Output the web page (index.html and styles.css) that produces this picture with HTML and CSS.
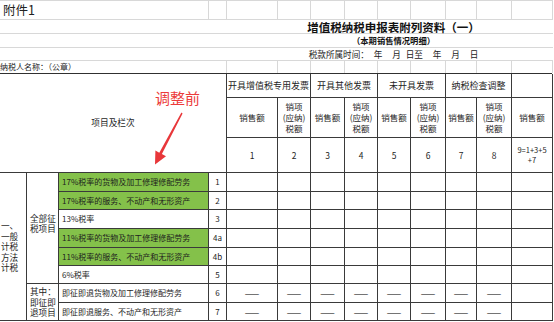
FILE: index.html
```html
<!DOCTYPE html>
<html lang="zh-CN">
<head>
<meta charset="utf-8">
<title>增值税纳税申报表附列资料（一）</title>
<link rel="stylesheet" href="styles.css">
</head>
<body>
<div class="page">
  <div class="sheet-top">
    <div class="tc first span2 attach">附件1</div>
    <div class="tc first"></div><div class="tc first"></div><div class="tc first"></div><div class="tc first"></div><div class="tc first"></div>
    <div class="tc first"></div><div class="tc first"></div><div class="tc first"></div><div class="tc first"></div><div class="tc first"></div>
    <div class="tc full title">增值税纳税申报表附列资料（一）</div>
    <div class="tc full subtitle">（本期销售情况明细）</div>
    <div class="tc full period">税款所属时间： 年  月 日至  年  月  日</div>
    <div class="tc last span3 payer">纳税人名称：（公章）</div>
    <div class="tc last"></div><div class="tc last"></div><div class="tc last"></div><div class="tc last"></div><div class="tc last"></div>
    <div class="tc last"></div><div class="tc last"></div><div class="tc last"></div><div class="tc last"></div>
  </div>

  <div class="form">
    <div class="c h-item">项目及栏次</div>
    <div class="c span2 grp">开具增值税专用发票</div>
    <div class="c span2 grp">开具其他发票</div>
    <div class="c span2 grp">未开具发票</div>
    <div class="c span2 grp">纳税检查调整</div>
    <div class="c grp"></div>

    <div class="c sub">销售额</div><div class="c sub">销项<br>(应纳)<br>税额</div>
    <div class="c sub">销售额</div><div class="c sub">销项<br>(应纳)<br>税额</div>
    <div class="c sub">销售额</div><div class="c sub">销项<br>(应纳)<br>税额</div>
    <div class="c sub">销售额</div><div class="c sub">销项<br>(应纳)<br>税额</div>
    <div class="c sub">销售额</div>

    <div class="c num">1</div><div class="c num">2</div><div class="c num">3</div><div class="c num">4</div>
    <div class="c num">5</div><div class="c num">6</div><div class="c num">7</div><div class="c num">8</div>
    <div class="c num formula">9=1+3+5<br>+7</div>

    <div class="c side v-general">一、一般计税方法计税</div>
    <div class="c side v-all">全部征税项目</div>
    <div class="c side v-refund">其中：即征即退项目</div>

    <div class="c item green">17%税率的货物及加工修理修配劳务</div><div class="c no">1</div>
    <div class="c"></div><div class="c"></div><div class="c"></div><div class="c"></div><div class="c"></div><div class="c"></div><div class="c"></div><div class="c"></div><div class="c"></div>

    <div class="c item green">17%税率的服务、不动产和无形资产</div><div class="c no">2</div>
    <div class="c"></div><div class="c"></div><div class="c"></div><div class="c"></div><div class="c"></div><div class="c"></div><div class="c"></div><div class="c"></div><div class="c"></div>

    <div class="c item">13%税率</div><div class="c no">3</div>
    <div class="c"></div><div class="c"></div><div class="c"></div><div class="c"></div><div class="c"></div><div class="c"></div><div class="c"></div><div class="c"></div><div class="c"></div>

    <div class="c item green">11%税率的货物及加工修理修配劳务</div><div class="c no">4a</div>
    <div class="c"></div><div class="c"></div><div class="c"></div><div class="c"></div><div class="c"></div><div class="c"></div><div class="c"></div><div class="c"></div><div class="c"></div>

    <div class="c item green">11%税率的服务、不动产和无形资产</div><div class="c no">4b</div>
    <div class="c"></div><div class="c"></div><div class="c"></div><div class="c"></div><div class="c"></div><div class="c"></div><div class="c"></div><div class="c"></div><div class="c"></div>

    <div class="c item">6%税率</div><div class="c no">5</div>
    <div class="c"></div><div class="c"></div><div class="c"></div><div class="c"></div><div class="c"></div><div class="c"></div><div class="c"></div><div class="c"></div><div class="c"></div>

    <div class="c item">即征即退货物及加工修理修配劳务</div><div class="c no">6</div>
    <div class="c dash">——</div><div class="c dash">——</div><div class="c dash">——</div><div class="c dash">——</div>
    <div class="c dash">——</div><div class="c dash">——</div><div class="c dash">——</div><div class="c dash">——</div><div class="c"></div>

    <div class="c item">即征即退服务、不动产和无形资产</div><div class="c no">7</div>
    <div class="c dash">——</div><div class="c dash">——</div><div class="c dash">——</div><div class="c dash">——</div>
    <div class="c dash">——</div><div class="c dash">——</div><div class="c dash">——</div><div class="c dash">——</div><div class="c"></div>
  </div>

  <div class="note">调整前</div>
  <svg class="arrow" width="554" height="322" viewBox="0 0 554 322">
    <polygon points="181.4,112.6 182.6,113.4 161.9,154.1 166,156.3 155,164.5 155.4,150.6 159.3,152.7" fill="#e8373a"/>
  </svg>
</div>
</body>
</html>
```

FILE: styles.css
```css
html, body {
  margin: 0;
  padding: 0;
  background: #ffffff;
}

body {
  font-family: "Noto Sans CJK SC", "Noto Sans", sans-serif;
  color: #1e1e1e;
}

.page {
  position: relative;
  width: 554px;
  height: 322px;
  overflow: hidden;
}

/* ---------- spreadsheet area above the form ---------- */
.sheet-top {
  display: grid;
  grid-template-columns: 59px 150px 18px 51px 33px 34px 33px 33px 35px 31px 35px 41px;
  grid-template-rows: 20px 14px 14px 13px 12px;
  width: 553px;
}

.tc {
  box-sizing: border-box;
  border-right: 1px solid #d8d8d8;
  border-bottom: 1px solid #d8d8d8;
  white-space: nowrap;
  overflow: visible;
}

.tc.first {
  border-top: 1px solid #d8d8d8;
}

.tc.last {
  border-bottom: none;
}

.span2 { grid-column: span 2; }
.span3 { grid-column: span 3; }
.full  { grid-column: 1 / -1; border-right: none; }

.attach {
  font-size: 12.5px;
  line-height: 18px;
  padding-left: 3px;
  color: #222;
}

.title,
.subtitle,
.period {
  padding-left: 234px;
  text-align: center;
  color: #111;
}

.title {
  font-size: 11.5px;
  font-weight: 700;
  line-height: 14px;
}

.subtitle {
  font-size: 8.3px;
  font-weight: 700;
  line-height: 13px;
}

.period {
  font-size: 8.6px;
  line-height: 12px;
  white-space: pre;
  word-spacing: 3px;
  color: #222;
}

.payer {
  font-size: 8px;
  line-height: 12px;
  color: #1a1a1a;
}

/* ---------- the declaration form ---------- */
.form {
  display: grid;
  grid-template-columns: 27px 32px 150px 18px 51px 33px 34px 33px 33px 35px 31px 35px 41px;
  grid-template-rows: 24px 40px 35px 19px 18px 19px 19px 18px 18px 19px 18px;
  width: 552px;
  border-top: 1px solid #303030;
}

.c {
  box-sizing: border-box;
  border-right: 1px solid #3a3a3a;
  border-bottom: 1px solid #3a3a3a;
  display: flex;
  align-items: center;
  justify-content: center;
  text-align: center;
  font-size: 8px;
  line-height: 10px;
  color: #1e1e1e;
  min-width: 0;
}

.h-item {
  grid-column: 1 / 5;
  grid-row: 1 / 4;
  font-size: 8.7px;
}

.grp {
  font-size: 9px;
  white-space: nowrap;
}

.sub {
  font-size: 8.5px;
  line-height: 11px;
}

.num {
  font-size: 8.5px;
}

.formula {
  font-size: 7.5px;
  line-height: 10px;
}

.side {
  justify-content: flex-start;
  text-align: left;
  font-size: 8.6px;
  line-height: 10.5px;
}

.v-general {
  grid-column: 1;
  grid-row: 4 / 12;
  padding: 0 6px 0 1px;
}

.v-all {
  grid-column: 2;
  grid-row: 4 / 10;
  padding: 0 1px 10px 3px;
}

.v-refund {
  grid-column: 2;
  grid-row: 10 / 12;
  padding: 0 1px 0 3px;
}

.item {
  justify-content: flex-start;
  text-align: left;
  padding-left: 3px;
  white-space: nowrap;
}

.green {
  background: #84c14a;
}

.no {
  font-size: 8px;
}

.dash {
  color: #555555;
  font-size: 8.5px;
  font-weight: 700;
  letter-spacing: 2px;
  padding-left: 2px;
}

/* ---------- annotation overlay ---------- */
.note {
  position: absolute;
  left: 155px;
  top: 89px;
  font-size: 15px;
  line-height: 18px;
  color: #ec3b3b;
}

.arrow {
  position: absolute;
  left: 0;
  top: 0;
  pointer-events: none;
}
```
